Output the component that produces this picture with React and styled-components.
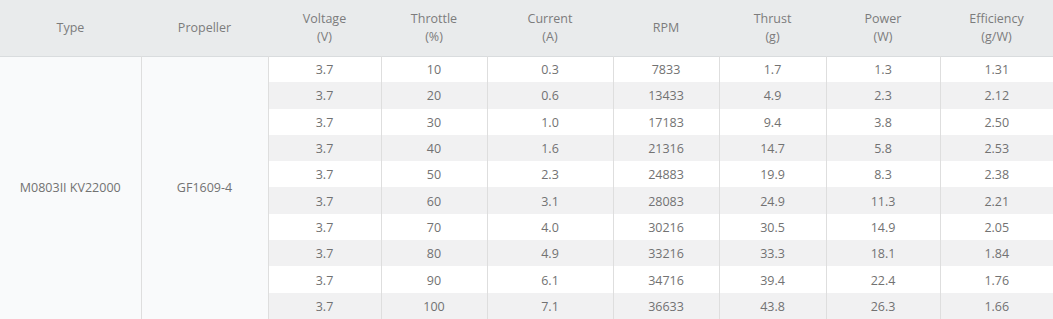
import React from "react";
import { styled, createGlobalStyle } from "styled-components";

const GlobalStyle = createGlobalStyle`
  body {
    margin: 0;
    background: #ffffff;
    font-family: "Open Sans", "Noto Sans", sans-serif;
  }
`;

const Table = styled.table`
  width: 1053px;
  border-collapse: collapse;
  table-layout: fixed;
  font-size: 12.5px;
  color: #727272;
`;

const HeadRow = styled.tr`
  background-color: #e9ebec;
  height: 56px;
  border-bottom: 1px solid #d9dcde;
`;

const Th = styled.th`
  font-weight: normal;
  color: #7c7c7c;
  line-height: 18px;
  text-align: center;
  padding: 1px 0 0;
`;

const Row = styled.tr`
  height: 26.3px;
  background-color: ${(props) => (props.$striped ? "#f1f1f2" : "#ffffff")};
`;

const Td = styled.td`
  text-align: center;
  padding: 1px 0 0;
  border-left: 1px solid #dedede;
`;

const MergedTd = styled.td`
  text-align: center;
  padding: 0;
  background-color: #f9fafb;
  border-left: ${(props) => (props.$first ? "none" : "1px solid #dedede")};
`;

const columns = [
  { width: 141, label: ["Type"] },
  { width: 127, label: ["Propeller"] },
  { width: 113, label: ["Voltage", "(V)"] },
  { width: 106, label: ["Throttle", "(%)"] },
  { width: 126, label: ["Current", "(A)"] },
  { width: 106, label: ["RPM"] },
  { width: 107, label: ["Thrust", "(g)"] },
  { width: 114, label: ["Power", "(W)"] },
  { width: 113, label: ["Efficiency", "(g/W)"] },
];

const rows = [
  ["3.7", "10", "0.3", "7833", "1.7", "1.3", "1.31"],
  ["3.7", "20", "0.6", "13433", "4.9", "2.3", "2.12"],
  ["3.7", "30", "1.0", "17183", "9.4", "3.8", "2.50"],
  ["3.7", "40", "1.6", "21316", "14.7", "5.8", "2.53"],
  ["3.7", "50", "2.3", "24883", "19.9", "8.3", "2.38"],
  ["3.7", "60", "3.1", "28083", "24.9", "11.3", "2.21"],
  ["3.7", "70", "4.0", "30216", "30.5", "14.9", "2.05"],
  ["3.7", "80", "4.9", "33216", "33.3", "18.1", "1.84"],
  ["3.7", "90", "6.1", "34716", "39.4", "22.4", "1.76"],
  ["3.7", "100", "7.1", "36633", "43.8", "26.3", "1.66"],
];

const App = () => {
  return (
    <>
      <GlobalStyle />
      <Table>
        <colgroup>
          {columns.map((c, i) => (
            <col key={i} style={{ width: c.width }} />
          ))}
        </colgroup>
        <thead>
          <HeadRow>
            {columns.map((c, i) => (
              <Th key={i}>
                {c.label.map((line, j) => (
                  <div key={j}>{line}</div>
                ))}
              </Th>
            ))}
          </HeadRow>
        </thead>
        <tbody>
          {rows.map((r, i) => (
            <Row key={i} $striped={i % 2 === 1}>
              {i === 0 && (
                <>
                  <MergedTd rowSpan={rows.length} $first>
                    M0803II KV22000
                  </MergedTd>
                  <MergedTd rowSpan={rows.length}>GF1609-4</MergedTd>
                </>
              )}
              {r.map((v, j) => (
                <Td key={j}>{v}</Td>
              ))}
            </Row>
          ))}
        </tbody>
      </Table>
    </>
  );
};

export default App;
